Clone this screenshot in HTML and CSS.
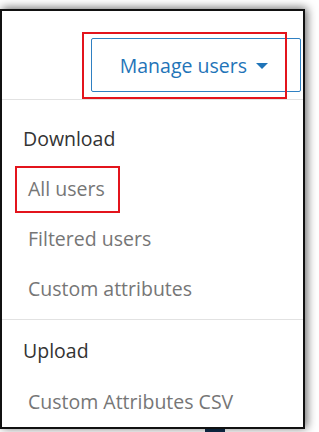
FILE: index.html
```html
<!DOCTYPE html>
<html lang="en">
<head>
    <meta charset="UTF-8">
    <meta name="viewport" content="width=device-width, initial-scale=1.0">
    <title>Manage users</title>
    <link rel="stylesheet" href="styles.css">
</head>
<body>
    <div class="frame">
        <div class="top">
            <button class="manage-btn">
                Manage users
                <span class="caret"></span>
            </button>
        </div>

        <div class="menu-group">
            <div class="menu-head">Download</div>
            <div class="menu-item">All users</div>
            <div class="menu-item">Filtered users</div>
            <div class="menu-item">Custom attributes</div>
        </div>

        <div class="menu-group last">
            <div class="menu-head">Upload</div>
            <div class="menu-item">Custom Attributes CSV</div>
        </div>

        <!-- red highlight boxes -->
        <div class="mark mark-btn"></div>
        <div class="mark mark-all"></div>
    </div>
    <div class="peek"></div>
</body>
</html>
```

FILE: styles.css
```css
body {
    margin: 0;
    padding: 0;
    background: #fff;
    font-family: "Open Sans", "Noto Sans", sans-serif;
}
.frame {
    position: relative;
    width: 301px;
    height: 416px;
    margin-top: 9px;
    border: 2px solid #111;
    background: #fff;
    box-shadow: 2px -1px 9px rgba(0, 0, 0, 0.6);
}
.top {
    height: 89px;
    padding-top: 27px;
    padding-right: 2px;
    box-sizing: border-box;
    display: flex;
    justify-content: flex-end;
    align-items: flex-start;
    border-bottom: 1px solid #e2e2e2;
}
.manage-btn {
    width: 210px;
    height: 54px;
    border: 1px solid #2f80c2;
    border-radius: 2px;
    background: #fff;
    color: #1f74b8;
    font-family: "Open Sans", "Noto Sans", sans-serif;
    font-size: 19.5px;
    display: flex;
    align-items: center;
    justify-content: flex-end;
    gap: 9px;
    padding: 0 32px 0 0;
}
.caret {
    width: 0;
    height: 0;
    border-left: 6px solid transparent;
    border-right: 6px solid transparent;
    border-top: 6px solid #1f74b8;
    margin-top: 2px;
}
.menu-group {
    padding: 14px 0 5px;
    border-bottom: 1px solid #e2e2e2;
}
.menu-group.last {
    border-bottom: none;
    padding-top: 6px;
}
.menu-head {
    line-height: 50px;
    font-size: 19.5px;
    color: #333;
    padding-left: 21px;
}
.menu-item {
    line-height: 50px;
    font-size: 19.5px;
    color: #767676;
    padding-left: 26px;
}
.last .menu-item {
    padding-top: 1px;
}
.mark {
    position: absolute;
    border: 2px solid #e3141c;
}
.mark-btn {
    left: 80px;
    top: 21px;
    width: 201px;
    height: 63px;
}
.mark-all {
    left: 13px;
    top: 155px;
    width: 101px;
    height: 43px;
}
.peek {
    width: 20px;
    height: 3px;
    margin-left: 205px;
    background: #0f2c4a;
}
```
